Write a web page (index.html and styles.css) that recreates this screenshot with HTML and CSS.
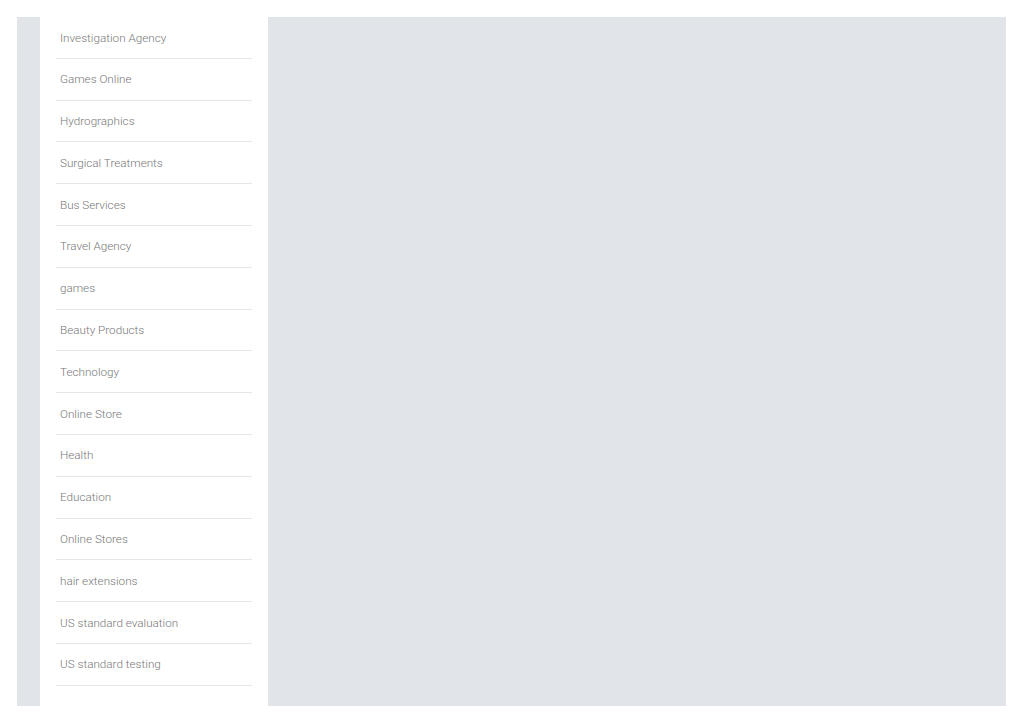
FILE: index.html
```html
<!DOCTYPE html>
<html>

<head>
    <title>Categories</title>
    <link rel="stylesheet" href="styles.css">
</head>

<body>
    <div class="page">
        <div class="gutter"></div>
        <div class="sidebar">
            <ul class="cats">
                <li>Investigation Agency</li>
                <li>Games Online</li>
                <li>Hydrographics</li>
                <li>Surgical Treatments</li>
                <li>Bus Services</li>
                <li>Travel Agency</li>
                <li>games</li>
                <li>Beauty Products</li>
                <li>Technology</li>
                <li>Online Store</li>
                <li>Health</li>
                <li>Education</li>
                <li>Online Stores</li>
                <li>hair extensions</li>
                <li>US standard evaluation</li>
                <li>US standard testing</li>
            </ul>
        </div>
        <div class="main"></div>
    </div>
</body>

</html>
```

FILE: styles.css
```css
body {
    margin: 0;
    padding: 17px 18px 17px 17px;
    background-color: #fff;
    font-family: Roboto, "Liberation Sans", sans-serif;
}

.page {
    display: flex;
    height: 689px;
}

.gutter {
    width: 23px;
    background-color: #e1e4e9;
}

.sidebar {
    width: 228px;
    padding: 0 16px;
    box-sizing: border-box;
    background-color: #fff;
}

.cats {
    list-style: none;
    margin: 0;
    padding: 0;
}

.cats li {
    padding: 12.5px 4px 11.5px;
    line-height: 16.8px;
    font-size: 11.7px;
    font-weight: 300;
    color: #777;
    border-bottom: 1px solid #e6e6e6;
}

.main {
    flex: 1;
    background-color: #e1e4e9;
}
```
